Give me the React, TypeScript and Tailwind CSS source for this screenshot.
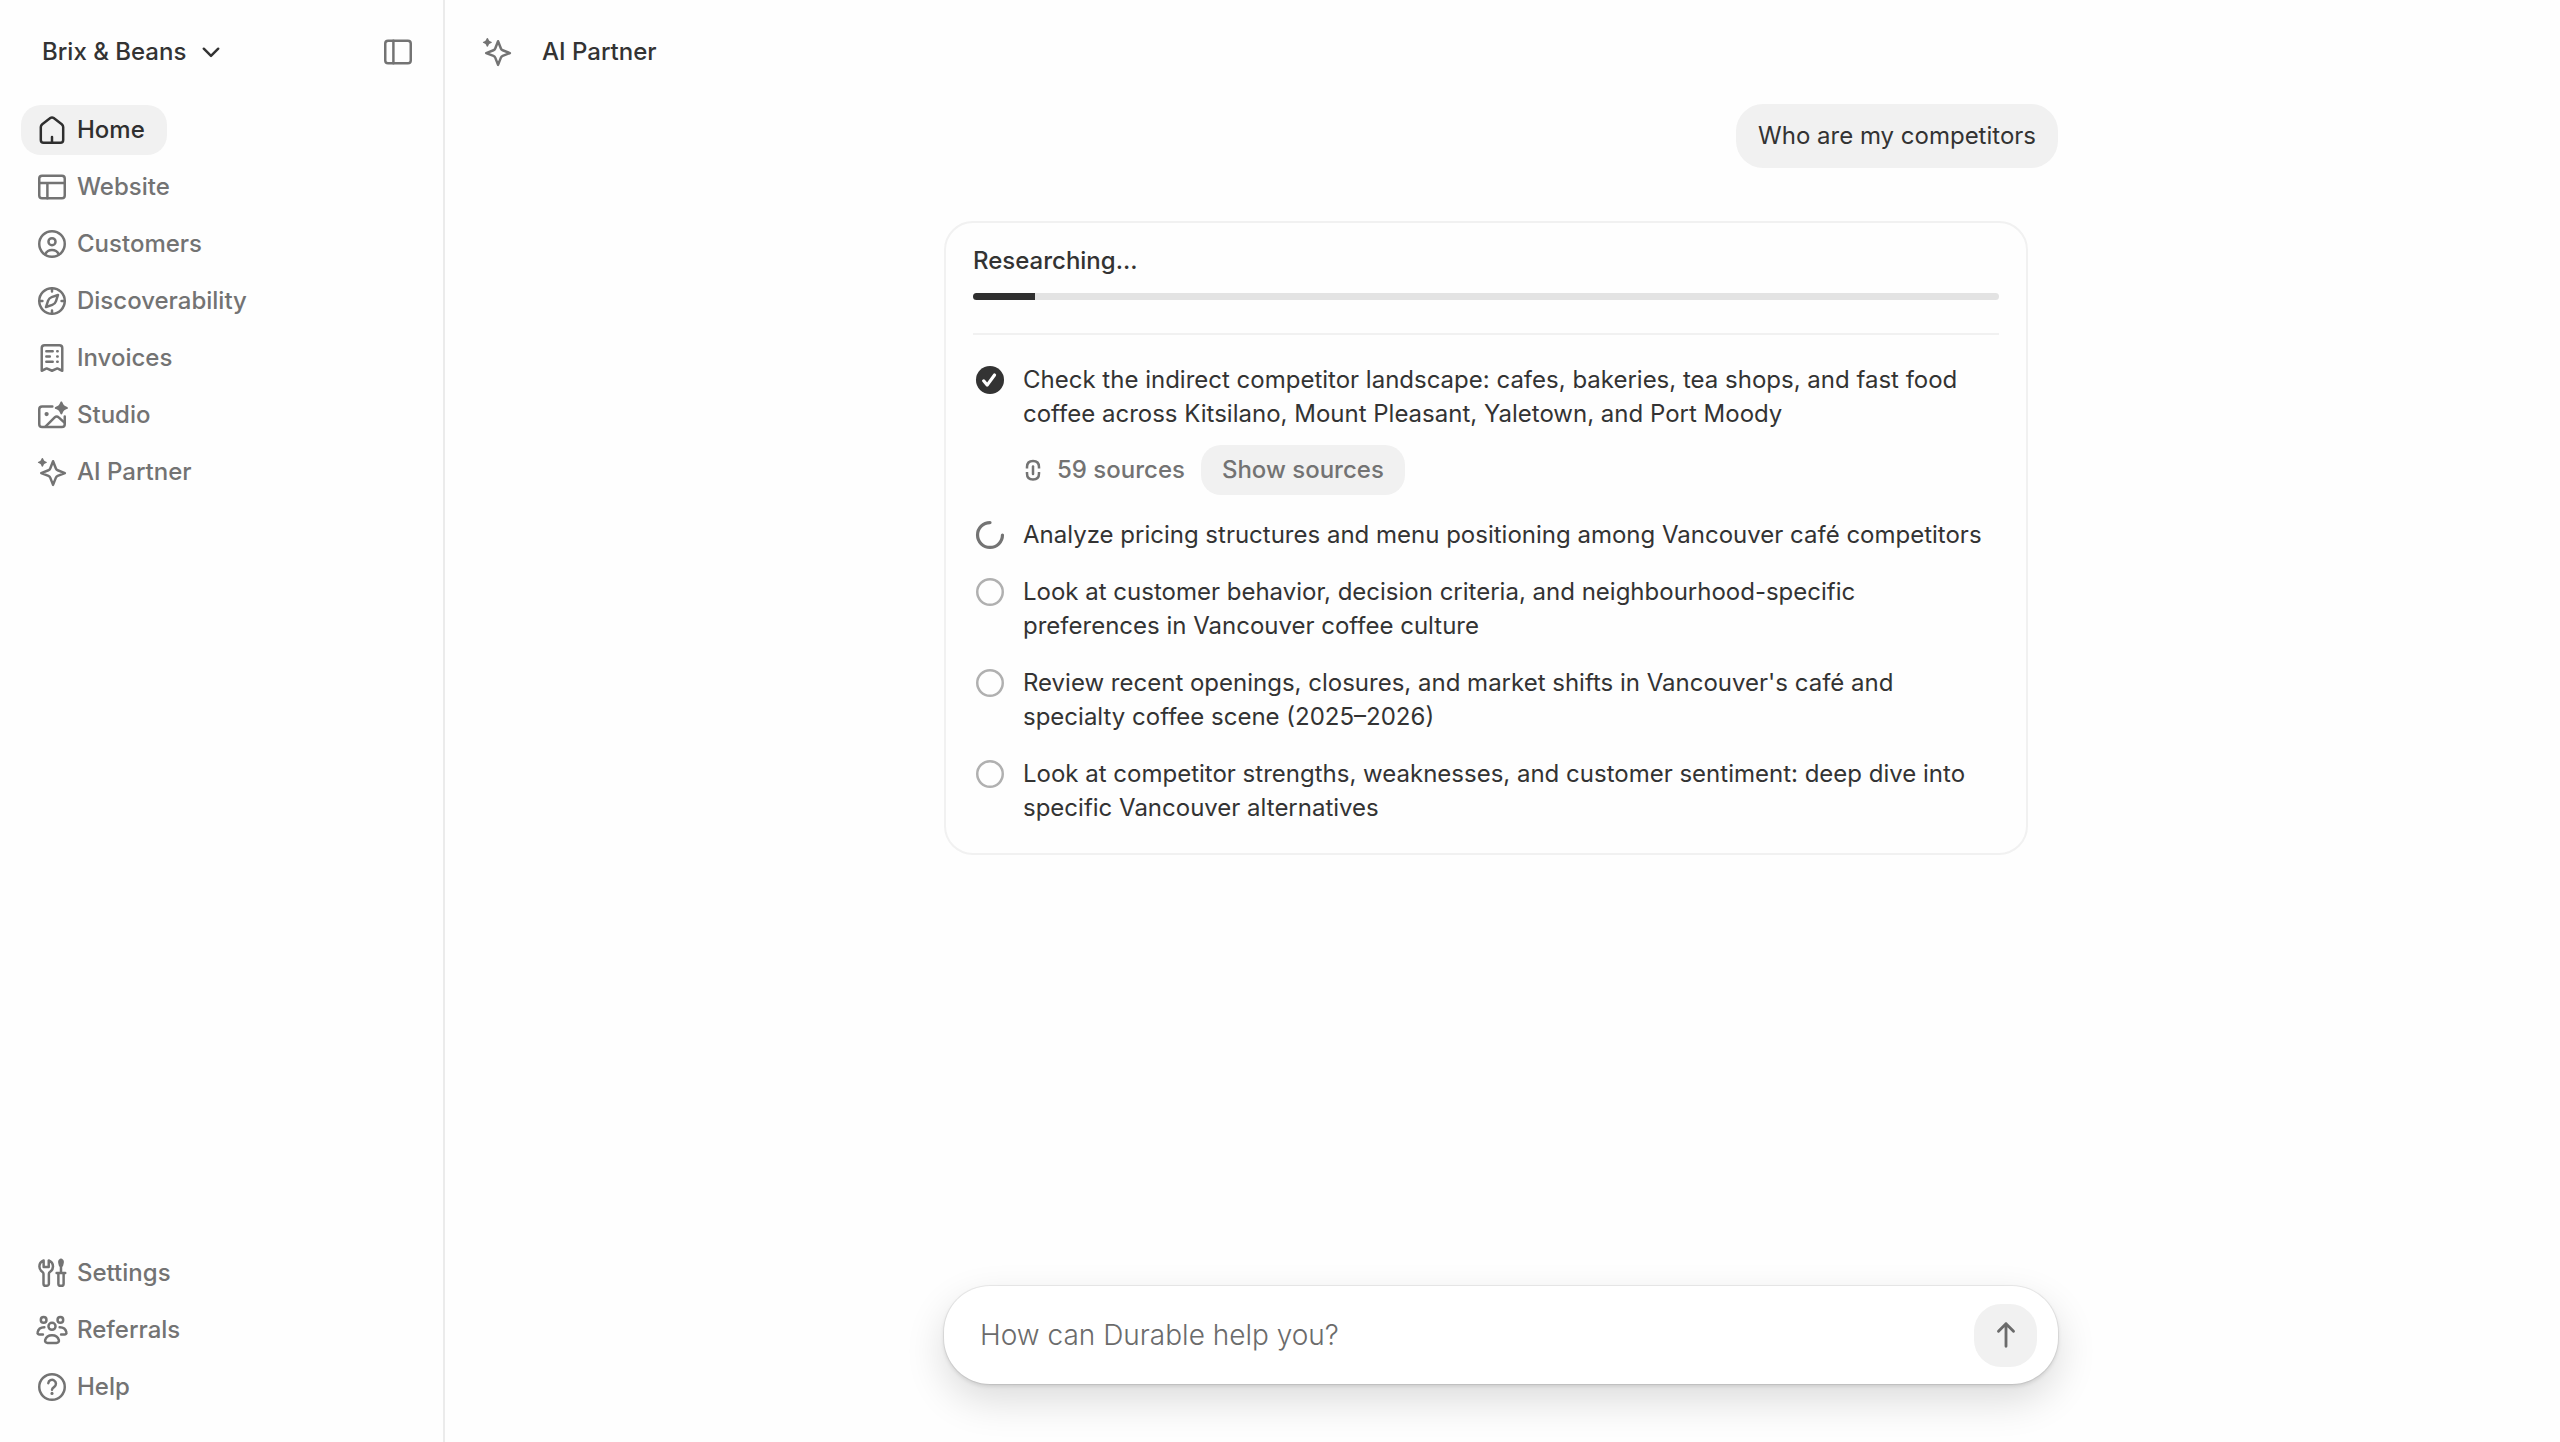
import React from 'react';

interface IconProps {
  className?: string;
  children: React.ReactNode;
}

const Icon: React.FC<IconProps> = ({ className = '', children }) => (
  <svg
    viewBox="0 0 24 24"
    fill="none"
    stroke="currentColor"
    strokeWidth={1.75}
    strokeLinecap="round"
    strokeLinejoin="round"
    aria-hidden="true"
    className={`size-[34px] shrink-0 ${className}`}
  >
    {children}
  </svg>
);

const HomeIcon = () => (
  <Icon>
    <path d="M4.1 9.900c0-.8.4-1.500 1-2l5.700-4.300a2 2 0 0 1 2.400 0l5.700 4.300c.6.5 1 1.200 1 2V19a2 2 0 0 1-2 2H6.100a2 2 0 0 1-2-2z" />
    <path d="M12 17v4" />
  </Icon>
);

const WebsiteIcon = () => (
  <Icon>
    <rect x="3" y="4" width="18" height="16" rx="2" />
    <path d="M3 9.250h18M8.750 9.250V20" />
  </Icon>
);

const CustomersIcon = () => (
  <Icon>
    <circle cx="12" cy="12" r="9" />
    <circle cx="12" cy="10.400" r="2.500" />
    <path d="M7.200 19.200c1-1.900 2.800-2.900 4.800-2.900s3.800 1 4.800 2.900" />
  </Icon>
);

const CompassIcon = () => (
  <Icon>
    <circle cx="12" cy="12" r="9" />
    <path d="M12 3v2.250M12 18.750V21M3 12h2.250M18.750 12H21" />
    <path d="M16.250 7.750l-1.500 4.500a4 4 0 0 1-2.500 2.500l-4.500 1.500 1.500-4.500a4 4 0 0 1 2.500-2.500z" />
  </Icon>
);

const InvoiceIcon = () => (
  <Icon>
    <path d="M4.750 21V5a2 2 0 0 1 2-2h10.500a2 2 0 0 1 2 2v16l-3.500-1.600L12 21l-3.750-1.600z" />
    <path d="M8 7.300h4.500M15.700 7.300h.300M8 11h2.500M15.700 11h.300M8 14.700h4.500M15.700 14.700h.300" />
  </Icon>
);

const StudioIcon = () => (
  <Icon>
    <path d="M12.250 6H5a2 2 0 0 0-2 2v10.500a2 2 0 0 0 2 2h14a2 2 0 0 0 2-2V13" />
    <path d="M7.200 20.300l6.700-6.600a2 2 0 0 1 2.800 0L21 17.600" />
    <circle cx="8.200" cy="11.300" r="1.500" fill="currentColor" stroke="none" />
    <path
      d="M18.600 2.400c.5 0 .6.3.8.8.6 1.700 1.300 2.400 3 3 .5.2.8.3.8.8s-.3.6-.8.8c-1.700.6-2.400 1.300-3 3-.2.5-.3.8-.8.8s-.6-.3-.8-.8c-.6-1.700-1.300-2.400-3-3-.5-.2-.8-.3-.8-.8s.3-.6.8-.8c1.700-.6 2.400-1.300 3-3 .2-.5.3-.8.8-.8z"
      fill="currentColor"
      stroke="none"
    />
  </Icon>
);

const SparkleIcon = () => (
  <Icon>
    <path d="M12.750 4.400l2 5.100a2.200 2.200 0 0 0 1.250 1.250l5.100 2-5.100 2a2.200 2.200 0 0 0-1.250 1.250l-2 5.100-2-5.100a2.200 2.200 0 0 0-1.250-1.250l-5.100-2 5.100-2a2.200 2.200 0 0 0 1.250-1.250z" />
    <path
      d="M5.200 2.100c.3 0 .5.2.6.5.4 1.200.9 1.700 2.100 2.100.3.1.5.2.5.5s-.2.4-.5.500c-1.200.4-1.700.9-2.100 2.100-.1.300-.3.500-.6.500s-.5-.2-.6-.500c-.4-1.200-.9-1.700-2.100-2.100-.3-.1-.5-.2-.5-.500s.2-.4.5-.500c1.200-.4 1.700-.9 2.100-2.100.1-.3.300-.5.600-.5z"
      fill="currentColor"
      stroke="none"
    />
  </Icon>
);

const SettingsIcon = () => (
  <Icon>
    <path d="M6.100 3.200a4.600 4.600 0 0 0-3 4.300c0 1.500.8 2.800 2 3.600.5.4.9.8.9 1.400v7a1.500 1.500 0 0 0 1.500 1.500h.8a1.500 1.500 0 0 0 1.500-1.500v-7c0-.6.3-1 .9-1.400a4.400 4.400 0 0 0 2-3.600 4.600 4.600 0 0 0-3-4.300v4.600H6.100z" />
    <path d="M18.350 6.500V12M15.250 12h6.100M16.500 12v7.500a1.500 1.500 0 0 0 1.500 1.500h.7a1.500 1.500 0 0 0 1.500-1.500V12" />
    <path d="M17.500 3.200c.5-.5 1.200-.5 1.700 0 .3.400.4.800.3 1.300l-.5 2.200h-1.300l-.5-2.200c-.1-.5 0-.9.300-1.300z" fill="currentColor" />
  </Icon>
);

const ReferralsIcon = () => (
  <Icon>
    <circle cx="6.100" cy="4.900" r="2" />
    <circle cx="17.900" cy="4.900" r="2" />
    <circle cx="12" cy="9.400" r="2.500" />
    <path d="M12 15.700c-2.600 0-4.300 1.500-4.850 3.500-.3 1.100.6 1.900 1.700 1.900h6.300c1.100 0 2-.8 1.700-1.900-.55-2-2.250-3.500-4.850-3.500z" />
    <path d="M6.600 10c-2.700 0-4.400 1.600-4.800 3.700-.2.900.5 1.500 1.400 1.500h2.400" />
    <path d="M17.400 10c2.700 0 4.400 1.600 4.800 3.700.2.900-.5 1.500-1.400 1.500h-2.400" />
  </Icon>
);

const HelpIcon = () => (
  <Icon>
    <circle cx="12" cy="12" r="9" />
    <path d="M9.400 9.300a2.700 2.700 0 1 1 4.200 2.600c-.9.600-1.600 1.100-1.600 2" />
    <circle cx="12" cy="16.500" r="1.100" fill="currentColor" stroke="none" />
  </Icon>
);

const PanelIcon = () => (
  <Icon>
    <rect x="3" y="4" width="18" height="16" rx="2" />
    <path d="M8.750 4v16" />
  </Icon>
);

const ChevronDownIcon = () => (
  <Icon>
    <path d="M6.900 9.700L12 14.800l5.100-5.100" />
  </Icon>
);

const ArrowUpIcon = () => (
  <Icon>
    <path d="M6.700 9.300L12 4l5.300 5.300M12 4v16" strokeWidth={2} />
  </Icon>
);

const LinkIcon = () => (
  <svg
    viewBox="-2 0 18 22"
    fill="none"
    stroke="currentColor"
    strokeWidth={2.5}
    aria-hidden="true"
    className="h-[22px] w-[18px] shrink-0"
  >
    <path d="M2 9.500V8c0-4 2.500-6 6-6s6 2 6 6v1.500" />
    <path d="M2 13v1.500c0 4 2.500 6 6 6s6-2 6-6V13" />
    <path d="M8 7.500v7.500" strokeLinecap="round" />
  </svg>
);

type StepStatus = 'done' | 'active' | 'pending';

const StatusIcon: React.FC<{ status: StepStatus }> = ({ status }) => {
  if (status === 'done') {
    return (
      <Icon>
        <circle cx="12" cy="12" r="9.900" fill="currentColor" stroke="none" />
        <path d="M7.500 12.600l2.500 3 5.200-7.100" stroke="#fff" strokeWidth={2.250} />
      </Icon>
    );
  }
  if (status === 'active') {
    return (
      <Icon className="text-[#737373]">
        <path d="M12 3.200A8.800 8.800 0 1 0 20.800 12" strokeWidth={2.250} />
      </Icon>
    );
  }
  return (
    <Icon className="text-[#b0b0b0]">
      <circle cx="12" cy="12" r="9" />
    </Icon>
  );
};

const mainNav = [
  { label: 'Home', icon: HomeIcon, active: true },
  { label: 'Website', icon: WebsiteIcon },
  { label: 'Customers', icon: CustomersIcon },
  { label: 'Discoverability', icon: CompassIcon },
  { label: 'Invoices', icon: InvoiceIcon },
  { label: 'Studio', icon: StudioIcon },
  { label: 'AI Partner', icon: SparkleIcon },
];

const footerNav = [
  { label: 'Settings', icon: SettingsIcon },
  { label: 'Referrals', icon: ReferralsIcon },
  { label: 'Help', icon: HelpIcon },
];

const steps: { text: string; status: StepStatus; sources?: number }[] = [
  {
    text: 'Check the indirect competitor landscape: cafes, bakeries, tea shops, and fast food coffee across Kitsilano, Mount Pleasant, Yaletown, and Port Moody',
    status: 'done',
    sources: 59,
  },
  { text: 'Analyze pricing structures and menu positioning among Vancouver café competitors', status: 'active' },
  {
    text: 'Look at customer behavior, decision criteria, and neighbourhood-specific preferences in Vancouver coffee culture',
    status: 'pending',
  },
  {
    text: "Review recent openings, closures, and market shifts in Vancouver's café and specialty coffee scene (2025–2026)",
    status: 'pending',
  },
  {
    text: 'Look at competitor strengths, weaknesses, and customer sentiment: deep dive into specific Vancouver alternatives',
    status: 'pending',
  },
];

interface NavListProps {
  label: string;
  items: { label: string; icon: React.FC; active?: boolean }[];
}

const NavList: React.FC<NavListProps> = ({ label, items }) => (
  <nav aria-label={label} className="flex flex-col items-start gap-[7px]">
    {items.map(({ label, icon: NavIcon, active }) => (
      <a
        key={label}
        href="#"
        aria-current={active ? 'page' : undefined}
        className={
          active
            ? 'flex h-[50px] items-center gap-2 rounded-[20px] bg-[#f1f1f1] pr-[22px] pl-[14px] text-[#2f2f2f]'
            : 'flex h-[50px] items-center gap-2 rounded-[20px] pr-[22px] pl-[14px] text-[#737373] hover:bg-[#f7f7f7]'
        }
      >
        <NavIcon />
        <span>{label}</span>
      </a>
    ))}
  </nav>
);

const progress = 6;

const App: React.FC = () => {
  return (
    <div className="flex min-h-screen bg-[#fefefe] font-['Inter',sans-serif] text-[24px] leading-[34px] text-[#333333]">
      {/* Sidebar */}
      <aside className="flex w-[445px] shrink-0 flex-col border-r-2 border-[#ebebeb] px-[21px] pb-[30px] font-medium">
        <div className="flex h-[105px] items-start justify-between pt-[35px] pr-[7px] pl-[21px]">
          <button type="button" className="flex items-center gap-2">
            <span>Brix &amp; Beans</span>
            <ChevronDownIcon />
          </button>
          <button type="button" aria-label="Toggle sidebar" className="text-[#737373]">
            <PanelIcon />
          </button>
        </div>
        <NavList label="Main" items={mainNav} />
        <div className="mt-auto">
          <NavList label="Support" items={footerNav} />
        </div>
      </aside>

      {/* Conversation */}
      <div className="flex flex-1 flex-col pr-[3px]">
        <header className="flex h-[104px] items-start gap-[28px] pt-[35px] pl-[35px] font-medium">
          <span className="text-[#737373]">
            <SparkleIcon />
          </span>
          <h1>AI Partner</h1>
        </header>

        <main className="mx-auto flex w-full max-w-[1114px] flex-1 flex-col pb-[58px]">
          <p className="self-end rounded-[27px] bg-[#f1f1f1] px-[22px] py-[15px]">Who are my competitors</p>

          <section className="mt-[53px] mr-[30px] rounded-[29px] border-2 border-[#f1f1f1] px-[27px] pt-[21px] pb-[28px]">
            <h2 className="font-medium">Researching...</h2>
            <div
              role="progressbar"
              aria-label="Research progress"
              aria-valuenow={progress}
              className="mt-[15px] h-[7px] overflow-hidden rounded-full bg-[#e3e3e3]"
            >
              <div className="h-full bg-[#2f2f2f]" style={{ width: `${progress}%` }} />
            </div>
            <ol className="mt-[33px] flex flex-col gap-[23px] border-t-2 border-[#f1f1f1] pt-[28px]">
              {steps.map(({ text, status, sources }) => (
                <li key={text} className="flex items-start gap-4">
                  <StatusIcon status={status} />
                  <div className="flex-1 pr-2">
                    <p>{text}</p>
                    {sources && (
                      <div className="mt-[14px] flex items-center font-medium text-[#737373]">
                        <LinkIcon />
                        <span className="mx-4">{sources} sources</span>
                        <button type="button" className="h-[50px] rounded-[20px] bg-[#f1f1f1] px-[21px]">
                          Show sources
                        </button>
                      </div>
                    )}
                  </div>
                </li>
              ))}
            </ol>
          </section>

          {/* Composer */}
          <form
            onSubmit={(e) => e.preventDefault()}
            className="mt-auto flex h-[98px] items-center rounded-[46px] bg-white pr-[21px] pl-[36px] shadow-[0_0_0_1px_rgba(0,0,0,0.06),0_2px_4px_rgba(0,0,0,0.12),0_16px_40px_rgba(0,0,0,0.14)]"
          >
            <input
              type="text"
              aria-label="Message"
              placeholder="How can Durable help you?"
              className="h-full flex-1 bg-transparent text-[28px] font-light outline-none placeholder:text-[#6b6b6b]"
            />
            <button
              type="submit"
              aria-label="Send"
              className="flex size-[63px] items-center justify-center rounded-[27px] bg-[#f1f1f1] text-[#6b6b6b]"
            >
              <ArrowUpIcon />
            </button>
          </form>
        </main>
      </div>
    </div>
  );
};

export default App;
